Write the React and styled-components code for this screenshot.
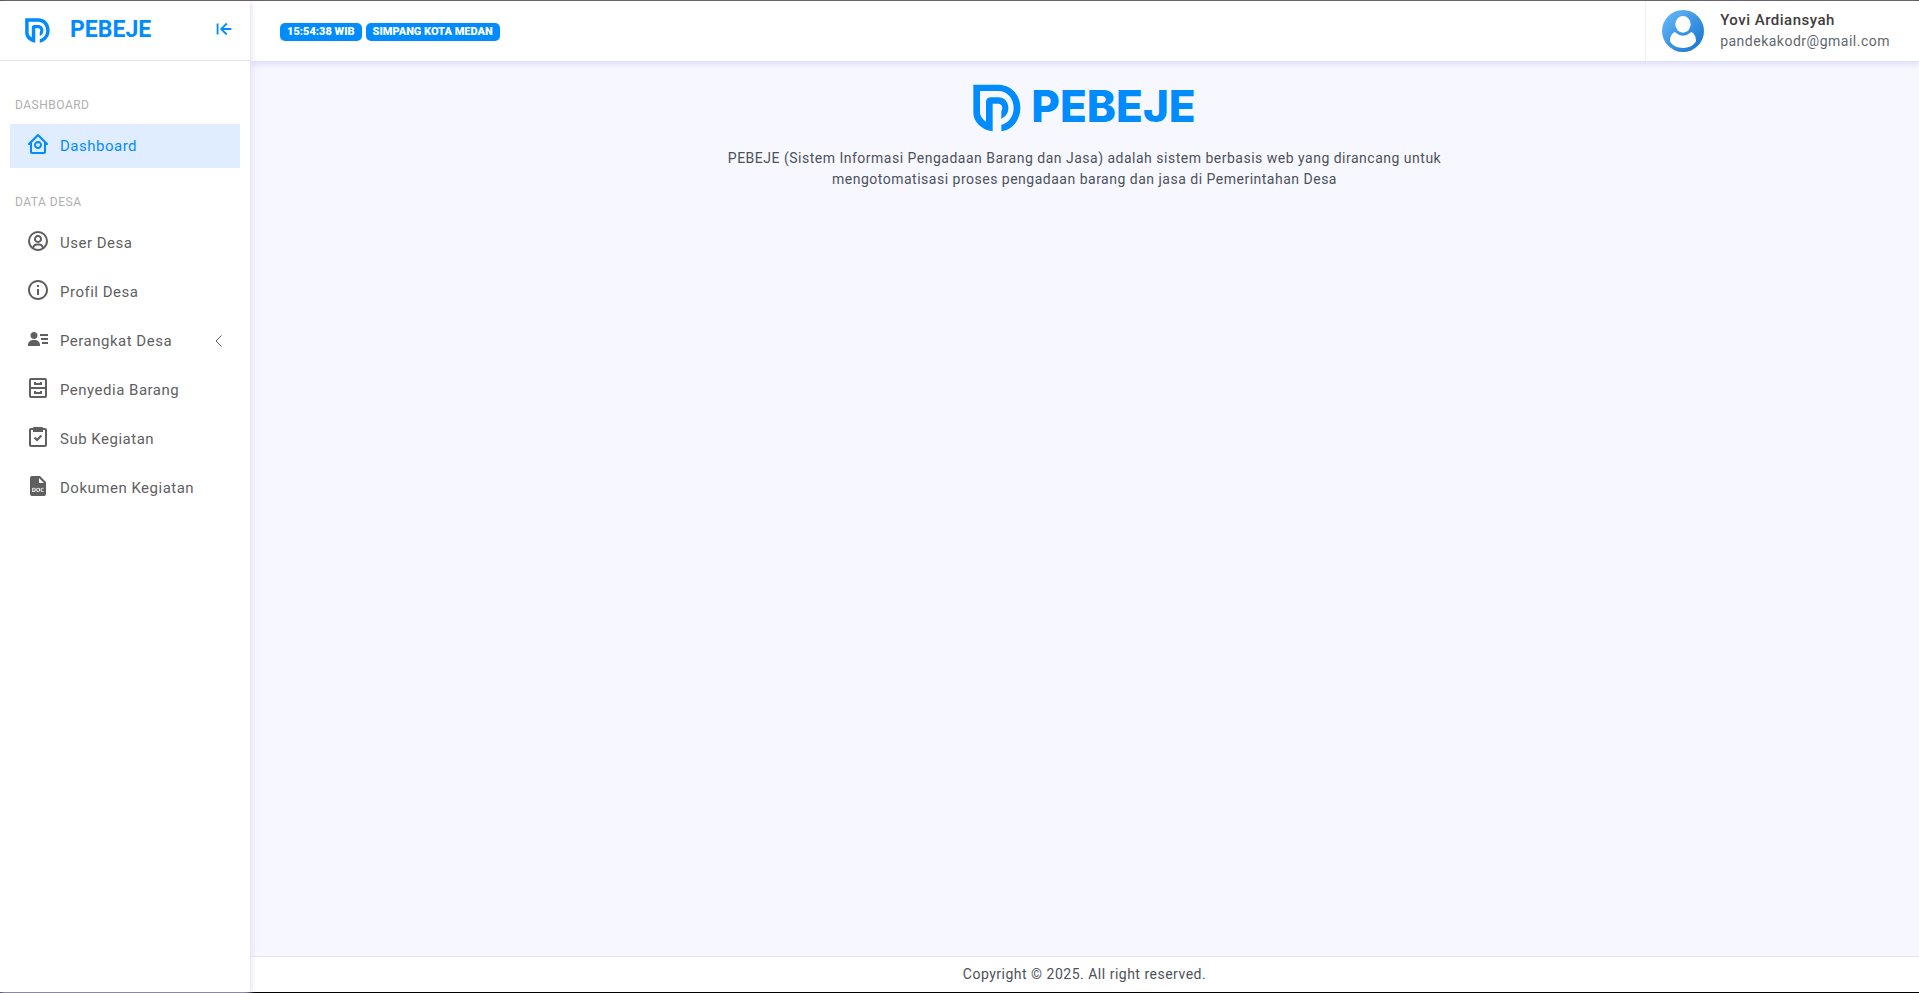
import React from 'react'
import styled, { createGlobalStyle, ThemeProvider } from 'styled-components'
import {
    BiArrowToLeft,
    BiCabinet,
    BiHomeCircle,
    BiInfoCircle,
    BiTask,
    BiUserCircle,
    BiSolidFileDoc,
    BiSolidUserDetail,
} from 'react-icons/bi'

const theme = {
    primary: '#008cff',
    primaryLight: '#e0ecff',
    menu: '#5f5f5f',
    label: '#b0afaf',
    border: '#e4e4e4',
    sidebar: '250px',
}

const GlobalStyle = createGlobalStyle`
    * {
        box-sizing: border-box;
    }
    body {
        margin: 0;
        font-family: Roboto, sans-serif;
        font-size: 14px;
        line-height: 21px;
        letter-spacing: 0.5px;
        color: #4c5258;
        background: #f7f7ff;
    }
`;
const Wrapper = styled.div`
    display: flex;
    min-height: 100vh;
    border-top: 1px solid #4d4040;
    border-bottom: 1px solid #000;
`;
const Sidebar = styled.aside`
    flex: none;
    width: ${({ theme }) => theme.sidebar};
    background: #fff;
    box-shadow: 0 2px 6px 0 rgba(218, 218, 253, 0.65), 0 2px 6px 0 rgba(206, 206, 238, 0.54);
    z-index: 2;
`;
const SidebarHeader = styled.div`
    display: flex;
    align-items: center;
    height: 60px;
    padding: 0 15px 0 25px;
    border-bottom: 1px solid ${({ theme }) => theme.border};
`;
const BrandMark = styled.span`
    display: flex;
    color: ${({ theme }) => theme.primary};
`;
const Brand = styled.h4`
    flex: 1;
    margin: 0 0 2px 20px;
    font-size: 23px;
    line-height: 28px;
    font-weight: 700;
    letter-spacing: 0;
    color: ${({ theme }) => theme.primary};
`;
const ToggleButton = styled.button`
    display: flex;
    padding: 0;
    margin-bottom: 4px;
    border: none;
    background: none;
    color: ${({ theme }) => theme.primary};
    font-size: 22px;
    cursor: pointer;
`;
const Nav = styled.nav`
    padding: 30px 10px 10px;
`;
const MenuLabel = styled.h6`
    margin: 0;
    padding: 5px;
    font-size: 12px;
    line-height: 18px;
    font-weight: 400;
    text-transform: uppercase;
    color: ${({ theme }) => theme.label};
`;
const Menu = styled.ul`
    display: flex;
    flex-direction: column;
    gap: 5px;
    margin: 5px 0 20px;
    padding: 0;
    list-style: none;
`;
const MenuLink = styled.a`
    display: flex;
    align-items: center;
    gap: 10px;
    height: 44px;
    padding: 0 16px;
    font-size: 15px;
    text-decoration: none;
    color: ${({ theme, $active }) => ($active ? theme.primary : theme.menu)};
    background: ${({ theme, $active }) => ($active ? theme.primaryLight : 'transparent')};

    &:hover {
        color: ${({ theme }) => theme.primary};
        background: ${({ theme }) => theme.primaryLight};
    }
`;
const MenuIcon = styled.span`
    display: flex;
    padding-bottom: 4px;
    font-size: 24px;
`;
const MenuText = styled.span`
    flex: 1;
`;
const ChevronBox = styled.span`
    display: flex;
    padding-right: 2px;
`;
const Main = styled.div`
    display: flex;
    flex: 1;
    flex-direction: column;
    min-width: 0;
`;
const Topbar = styled.header`
    display: flex;
    align-items: center;
    justify-content: space-between;
    height: 60px;
    padding: 0 29px 0 30px;
    background: #fff;
    box-shadow: 0 2px 6px 0 rgba(218, 218, 253, 0.65), 0 2px 6px 0 rgba(206, 206, 238, 0.54);
    z-index: 1;
`;
const Badges = styled.div`
    display: flex;
    gap: 4px;
    padding-top: 2px;
`;
const Badge = styled.span`
    padding: 4px 7px;
    border-radius: 5px;
    font-size: 11px;
    line-height: 10px;
    font-weight: 900;
    letter-spacing: 0;
    color: #fff;
    background: ${({ theme }) => theme.primary};
`;
const UserBox = styled.a`
    display: flex;
    align-items: center;
    gap: 16px;
    height: 60px;
    padding-left: 16px;
    border-left: 1px solid #f0f0f0;
    color: inherit;
    text-decoration: none;
`;
const UserName = styled.p`
    margin: 0;
    font-size: 15px;
    font-weight: 500;
    color: #413c3c;
`;
const UserMail = styled.p`
    margin: 0;
    color: #5f676e;
`;
const Content = styled.main`
    display: flex;
    flex: 1;
    flex-direction: column;
    align-items: center;
    padding: 23px 24px;
`;
const Logo = styled.div`
    display: flex;
    gap: 10px;
    height: 48px;
    margin-bottom: 16px;
    font-family: Inter, sans-serif;
    font-size: 44px;
    line-height: 44px;
    font-weight: 800;
    letter-spacing: 0;
    color: ${({ theme }) => theme.primary};
`;
const Intro = styled.p`
    max-width: 720px;
    margin: 0;
    text-align: center;
`;
const Footer = styled.footer`
    padding: 7px;
    border-top: 1px solid ${({ theme }) => theme.border};
    text-align: center;
    background: #fff;
`;

const LogoMark = ({ size }) => (
    <svg width={size} height={size} viewBox="0 0 142 144" fill="currentColor" aria-hidden="true">
        <path d="M0 2H75C115 2 141 33 141 72C141 108 117 137 84 142V122C106 118 121 96 121 72C121 44 102 21 75 21H20V85C20 96 28 106 38 113V55Q38 40 53 40H75C93 40 105 54 105 72C105 88 97 98 84 104V82C86 78 87 75 87 71C87 64 82 59 75 59H58V142C25 138 0 115 0 85Z" />
    </svg>
);

const Avatar = () => (
    <svg width="42" height="42" viewBox="0 0 126 126" aria-hidden="true">
        <defs>
            <linearGradient id="avatar" x1="0" y1="0" x2="1" y2="1">
                <stop offset="0.1" stopColor="#64b5f6" />
                <stop offset="0.9" stopColor="#1976d2" />
            </linearGradient>
        </defs>
        <circle cx="63" cy="63" r="63" fill="url(#avatar)" />
        <ellipse cx="63" cy="43" rx="23" ry="25" fill="#fff" />
        <path d="M38 66Q63 88 88 66C98 71 102 82 102 94C96 107 80 114 63 114S30 107 24 94C24 82 28 71 38 66Z" fill="#fff" />
    </svg>
);

const Chevron = () => (
    <svg width="7" height="12" viewBox="0 0 7 12" fill="none" stroke="currentColor" aria-hidden="true">
        <path d="M6.5 0.5L1 6L6.5 11.5" />
    </svg>
);

const groups = [
    {
        label: 'Dashboard',
        items: [{ text: 'Dashboard', Icon: BiHomeCircle, active: true }],
    },
    {
        label: 'Data Desa',
        items: [
            { text: 'User Desa', Icon: BiUserCircle },
            { text: 'Profil Desa', Icon: BiInfoCircle },
            { text: 'Perangkat Desa', Icon: BiSolidUserDetail, nested: true },
            { text: 'Penyedia Barang', Icon: BiCabinet },
            { text: 'Sub Kegiatan', Icon: BiTask },
            { text: 'Dokumen Kegiatan', Icon: BiSolidFileDoc },
        ],
    },
]

export default function App() {
    return (
        <ThemeProvider theme={theme}>
            <GlobalStyle />
            <Wrapper>
                <Sidebar>
                    <SidebarHeader>
                        <BrandMark>
                            <LogoMark size={25} />
                        </BrandMark>
                        <Brand>PEBEJE</Brand>
                        <ToggleButton type="button" aria-label="Toggle menu">
                            <BiArrowToLeft />
                        </ToggleButton>
                    </SidebarHeader>
                    <Nav>
                        {groups.map(({ label, items }) => (
                            <React.Fragment key={label}>
                                <MenuLabel>{label}</MenuLabel>
                                <Menu>
                                    {items.map(({ text, Icon, active, nested }) => (
                                        <li key={text}>
                                            <MenuLink href="#" $active={active}>
                                                <MenuIcon><Icon /></MenuIcon>
                                                <MenuText>{text}</MenuText>
                                                {nested && <ChevronBox><Chevron /></ChevronBox>}
                                            </MenuLink>
                                        </li>
                                    ))}
                                </Menu>
                            </React.Fragment>
                        ))}
                    </Nav>
                </Sidebar>
                <Main>
                    <Topbar>
                        <Badges>
                            <Badge>15:54:38 WIB</Badge>
                            <Badge>SIMPANG KOTA MEDAN</Badge>
                        </Badges>
                        <UserBox href="#">
                            <Avatar />
                            <div>
                                <UserName>Yovi Ardiansyah</UserName>
                                <UserMail>pandekakodr@gmail.com</UserMail>
                            </div>
                        </UserBox>
                    </Topbar>
                    <Content>
                        <Logo>
                            <LogoMark size={48} />
                            <span>PEBEJE</span>
                        </Logo>
                        <Intro>
                            PEBEJE (Sistem Informasi Pengadaan Barang dan Jasa) adalah sistem berbasis web yang dirancang untuk
                            mengotomatisasi proses pengadaan barang dan jasa di Pemerintahan Desa
                        </Intro>
                    </Content>
                    <Footer>Copyright © 2025. All right reserved.</Footer>
                </Main>
            </Wrapper>
        </ThemeProvider>
    )
}
